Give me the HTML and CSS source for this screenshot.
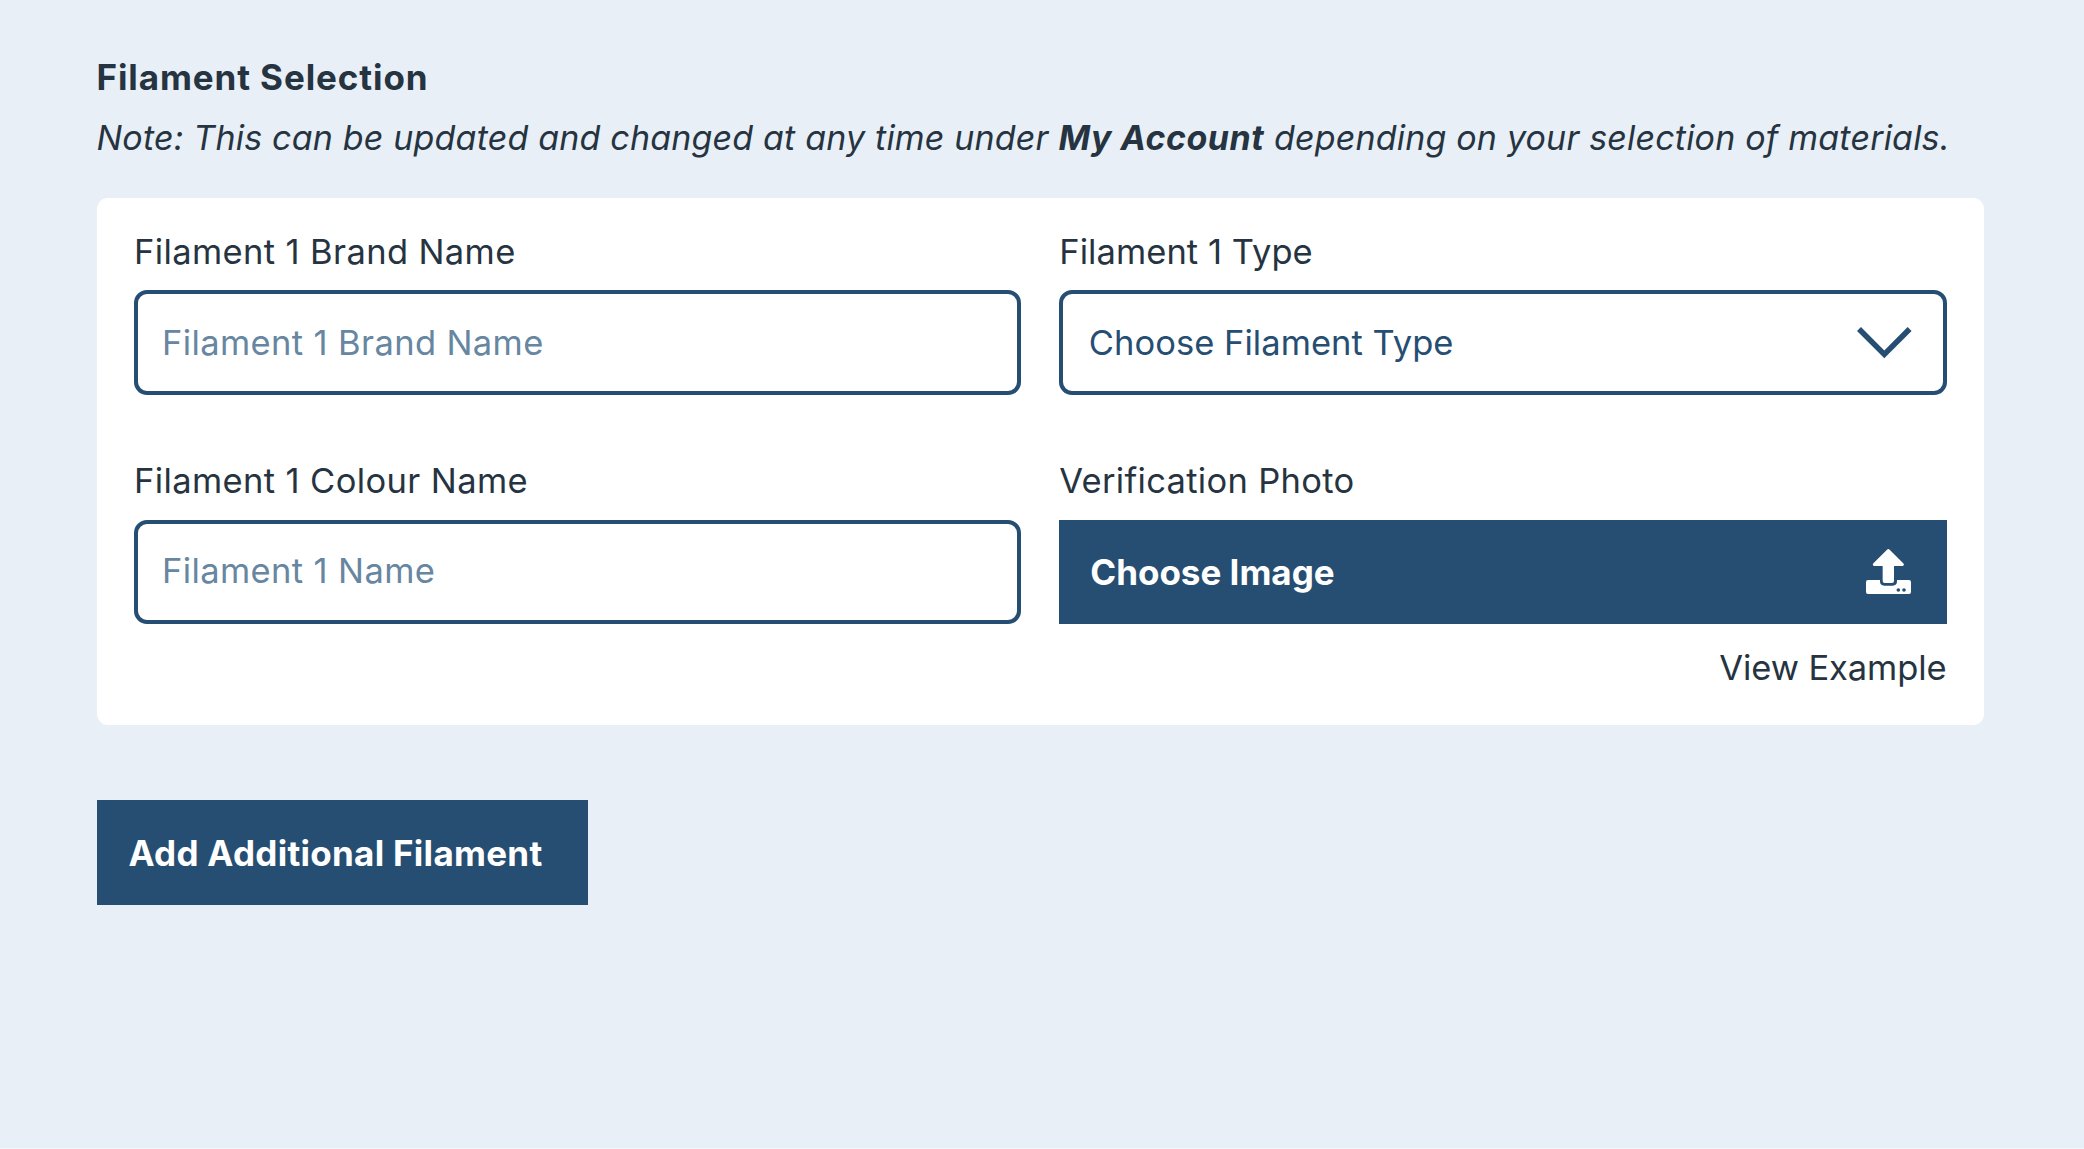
FILE: index.html
```html
<!DOCTYPE html>
<html lang="en">
<head>
  <meta charset="utf-8">
  <title>Filament Selection</title>
  <link rel="stylesheet" href="styles.css">
</head>
<body>
  <main class="page">
    <h1 class="title">Filament Selection</h1>
    <p class="note">Note: This can be updated and changed at any time under <strong class="note-strong">My Account</strong> depending on your selection of materials.</p>

    <section class="card">
      <div class="field">
        <label class="label" for="brand">Filament 1 Brand Name</label>
        <input class="control" id="brand" type="text" placeholder="Filament 1 Brand Name">
      </div>
      <div class="field">
        <span class="label label-type">Filament 1 Type</span>
        <div class="control select">
          <span>Choose Filament Type</span>
          <svg class="chevron" viewBox="0 0 55 32" aria-hidden="true"><path d="M2 2 27.3 27.4 52.6 2" fill="none" stroke="currentColor" stroke-width="5.6"/></svg>
        </div>
      </div>
      <div class="field">
        <label class="label" for="colour">Filament 1 Colour Name</label>
        <input class="control control-colour" id="colour" type="text" placeholder="Filament 1 Name">
      </div>
      <div class="field">
        <span class="label label-photo">Verification Photo</span>
        <button class="upload" type="button">
          <span>Choose Image</span>
          <svg class="upload-icon" viewBox="0 0 135 135" aria-hidden="true">
            <path fill="currentColor" d="M63 2Q67 -2 71 2L111 42Q115 46 113 49Q112 51 109 51H84V96Q84 102 78 102H56Q50 102 50 96V51H25Q22 51 21 49Q19 46 23 42Z"/>
            <path fill="currentColor" fill-rule="evenodd" d="M6 93H42V97Q42 110 55 110H80Q93 110 93 97V93H129Q135 93 135 99V129Q135 135 129 135H6Q0 135 0 129V99Q0 93 6 93ZM97 117.500a5.500 5.500 0 1 0 0 11a5.500 5.500 0 1 0 0-11ZM114 117.500a5.500 5.500 0 1 0 0 11a5.500 5.500 0 1 0 0-11Z"/>
          </svg>
        </button>
        <a class="example">View Example</a>
      </div>
    </section>

    <button class="add" type="button">Add Additional Filament</button>
  </main>
</body>
</html>
```
FILE: styles.css
```css
* {
  box-sizing: border-box;
}

body {
  margin: 0;
  background: #e8eff7;
  color: #263340;
  font-family: Inter, "Liberation Sans", sans-serif;
  font-size: 34.5px;
  line-height: 50px;
}

.page {
  min-height: 100vh;
  padding: 46.5px 100px 0 96.5px;
  border-bottom: 1px solid #f3f6fd;
}

.title,
.note {
  margin: 0;
  line-height: 60px;
  white-space: nowrap;
}

.title {
  margin-bottom: 1px;
  font-size: 35px;
  font-weight: 700;
  letter-spacing: 0.9px;
}

.note {
  font-size: 34px;
  font-style: italic;
  letter-spacing: 0.18px;
}

.note-strong {
  font-weight: 700;
  letter-spacing: 0.5px;
}

.card {
  display: grid;
  grid-template-columns: 1fr 1fr;
  column-gap: 38px;
  row-gap: 61.5px;
  align-items: start;
  margin-top: 30.5px;
  padding: 28.5px 37.5px 32px;
  border-radius: 11px;
  background: #fff;
}

.field {
  display: flex;
  flex-direction: column;
}

.label {
  margin-bottom: 13.5px;
  letter-spacing: 0.38px;
}

.label-photo {
  letter-spacing: 0.3px;
}

.label-type {
  letter-spacing: 0.06px;
}

.control {
  width: 100%;
  height: 104.5px;
  padding: 0 30.5px 0 24px;
  border: 4px solid #264e72;
  border-radius: 13px;
  background: #fff;
  color: #264e72;
  font: inherit;
  letter-spacing: 0.38px;
}

.control-colour {
  padding-bottom: 2px;
}

.control::placeholder {
  color: #6786a1;
  opacity: 1;
}

.select {
  display: flex;
  align-items: center;
  justify-content: space-between;
  padding-top: 2px;
  padding-left: 25.5px;
  letter-spacing: 0.04px;
}

.chevron {
  width: 55px;
  height: 32px;
}

.upload,
.add {
  border: 0;
  background: #264e72;
  color: #fff;
  font: inherit;
  font-size: 35px;
  font-weight: 650;
  text-align: left;
}

.upload {
  display: flex;
  align-items: center;
  justify-content: space-between;
  height: 104.5px;
  padding: 0 35.5px 0 31px;
  letter-spacing: 0;
}

.upload-icon {
  width: 45px;
  height: 45px;
}

.example {
  align-self: flex-end;
  margin-top: 19px;
  letter-spacing: -0.1px;
}

.add {
  display: block;
  width: 491.5px;
  height: 105px;
  margin-top: 75px;
  padding: 0 32px;
  letter-spacing: 0.28px;
  white-space: nowrap;
}
```
